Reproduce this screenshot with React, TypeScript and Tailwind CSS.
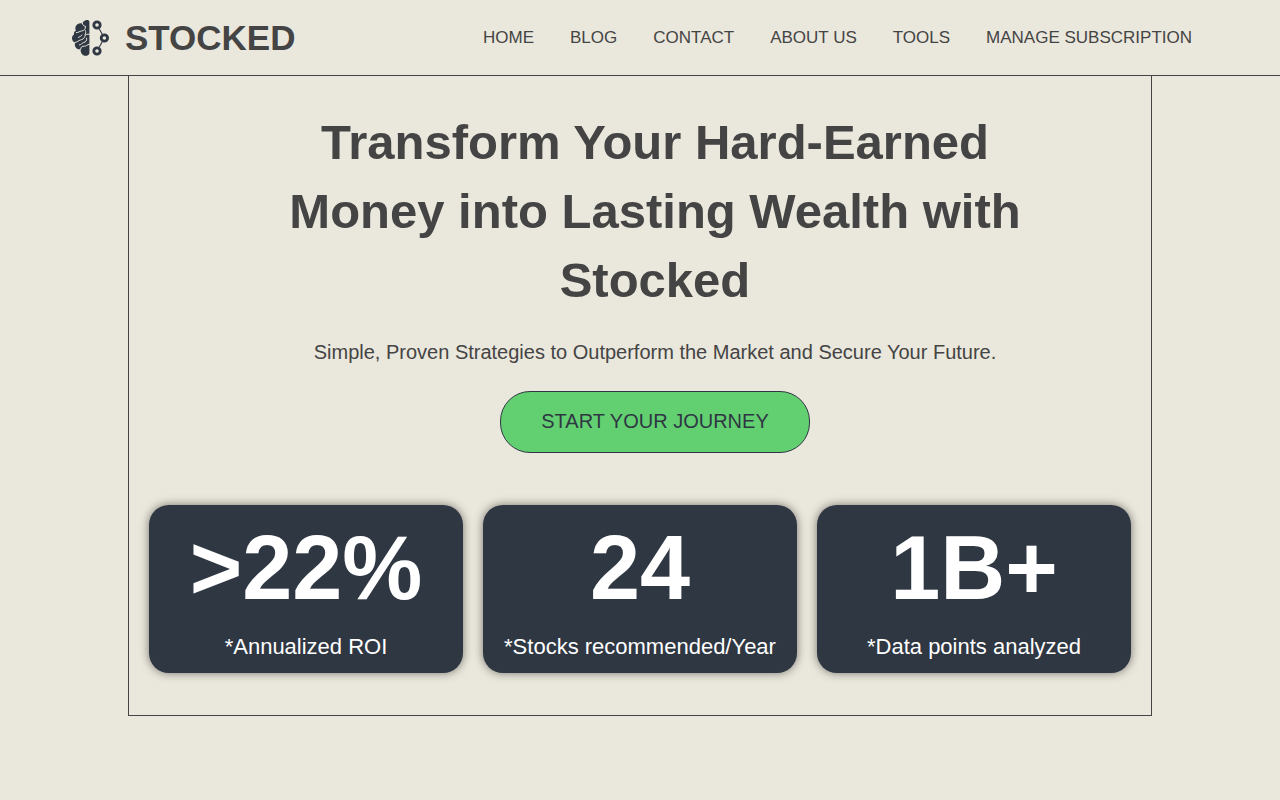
const links = ['HOME', 'BLOG', 'CONTACT', 'ABOUT US', 'TOOLS', 'MANAGE SUBSCRIPTION'];

const stats = [
  { value: '>22%', label: '*Annualized ROI' },
  { value: '24', label: '*Stocks recommended/Year' },
  { value: '1B+', label: '*Data points analyzed' },
];

function BrainLogo() {
  return (
    <svg viewBox="0 0 40 40" className="size-10" aria-hidden="true">
      <path
        fill="#2f3743"
        d="M19.4 3.6C18.8 2 17.2 1.9 15.8 2.2C14 2.6 12.8 3.8 12.4 5.4C9.6 4.6 6.2 6 5.4 9.2C5.2 10.6 5.4 11.8 5.9 12.8C4.2 13.4 3.7 14.8 4 16.4C2.6 17.2 1.8 18.8 2 20.8C2.2 22.8 3.4 24 5.2 24.4C4.6 26 4.6 28.2 6 29.8C7.2 31.2 9 31.6 10.6 31.2C10.4 34 11.4 36.6 13.8 37.5C16 38.2 18.6 37.6 19.4 35.4Z"
      />
      <g fill="none" stroke="#eae7dc" strokeWidth="1" strokeLinecap="round" strokeLinejoin="round">
        <path d="M12.4 5.4C12.6 7.2 13.8 8 15.4 8.2C15.8 11 14 12.8 11.6 13C9.4 13.2 8.6 14.8 6.4 14.6" />
        <path d="M19.4 16.2C17.2 16 15.4 16.4 14.8 18.4C14.2 20.6 12.4 21.6 10.4 22C8.4 22.4 7.6 24.4 5.2 24.4" />
        <path d="M15.4 12.6C16 14 15.8 15.4 15 16.8" />
        <path d="M12 17C11.2 18.6 9.6 18.4 8.4 19.4" />
        <path d="M16.6 20.2C17 22.6 15.8 24.2 13.6 24.6C11.6 25 11.4 26.8 9.4 27" />
        <path d="M10.6 31.2C10.8 29 12.2 28 14.2 28.2C16.6 28.4 16.8 26.4 19.4 26.2" />
      </g>
      <g fill="none" stroke="#2f3743">
        <path strokeWidth="1.1" d="M29.2 10.8L32.2 16.2M32.2 23.8L29.2 29.2" />
        <circle cx="27" cy="7" r="3.2" strokeWidth="2.8" />
        <circle cx="34.4" cy="20" r="3.2" strokeWidth="2.8" />
        <circle cx="27" cy="33" r="3.2" strokeWidth="2.8" />
      </g>
    </svg>
  );
}

export default function App() {
  return (
    <div className="min-h-screen bg-[#eae7dc] font-['Liberation_Sans',Arial,sans-serif] text-[#444444]">
      <header className="flex h-19 items-center justify-between border-b border-[#444444] pr-22 pl-[70px]">
        <a href="#" className="flex items-center gap-[15px] text-[35px] leading-10 font-bold">
          <BrainLogo />
          STOCKED
        </a>
        <nav className="flex gap-9 text-[17px] leading-6">
          {links.map((link) => (
            <a key={link} href="#">
              {link}
            </a>
          ))}
        </nav>
      </header>
      <main className="mx-auto w-4/5 border-x border-b border-[#444444] px-5 pt-8 pb-[42px]">
        <section className="flex flex-col items-center pl-[30px] text-center">
          <h1 className="max-w-[780px] text-[49px] leading-[69px] font-bold">
            Transform Your Hard-Earned Money into Lasting Wealth with Stocked
          </h1>
          <p className="mt-[23px] text-[20px] leading-7">
            Simple, Proven Strategies to Outperform the Market and Secure Your Future.
          </p>
          <button
            type="button"
            className="mt-[25px] h-[62px] rounded-[30px] border border-[#2f3743] bg-[#62d071] px-10 pb-[2px] text-[20px] text-[#2f3743]"
          >
            START YOUR JOURNEY
          </button>
        </section>
        <section className="mt-[52px] grid grid-cols-3 gap-5">
          {stats.map((stat) => (
            <div
              key={stat.label}
              className="flex flex-col items-center rounded-[20px] bg-[#2f3743] pt-3 pb-[10px] text-white shadow-[0_0_10px_rgba(0,0,0,0.5)]"
            >
              <p className="text-[90px] leading-[102px] font-bold">{stat.value}</p>
              <p className="mt-3 text-[22px] leading-8">{stat.label}</p>
            </div>
          ))}
        </section>
      </main>
    </div>
  );
}
